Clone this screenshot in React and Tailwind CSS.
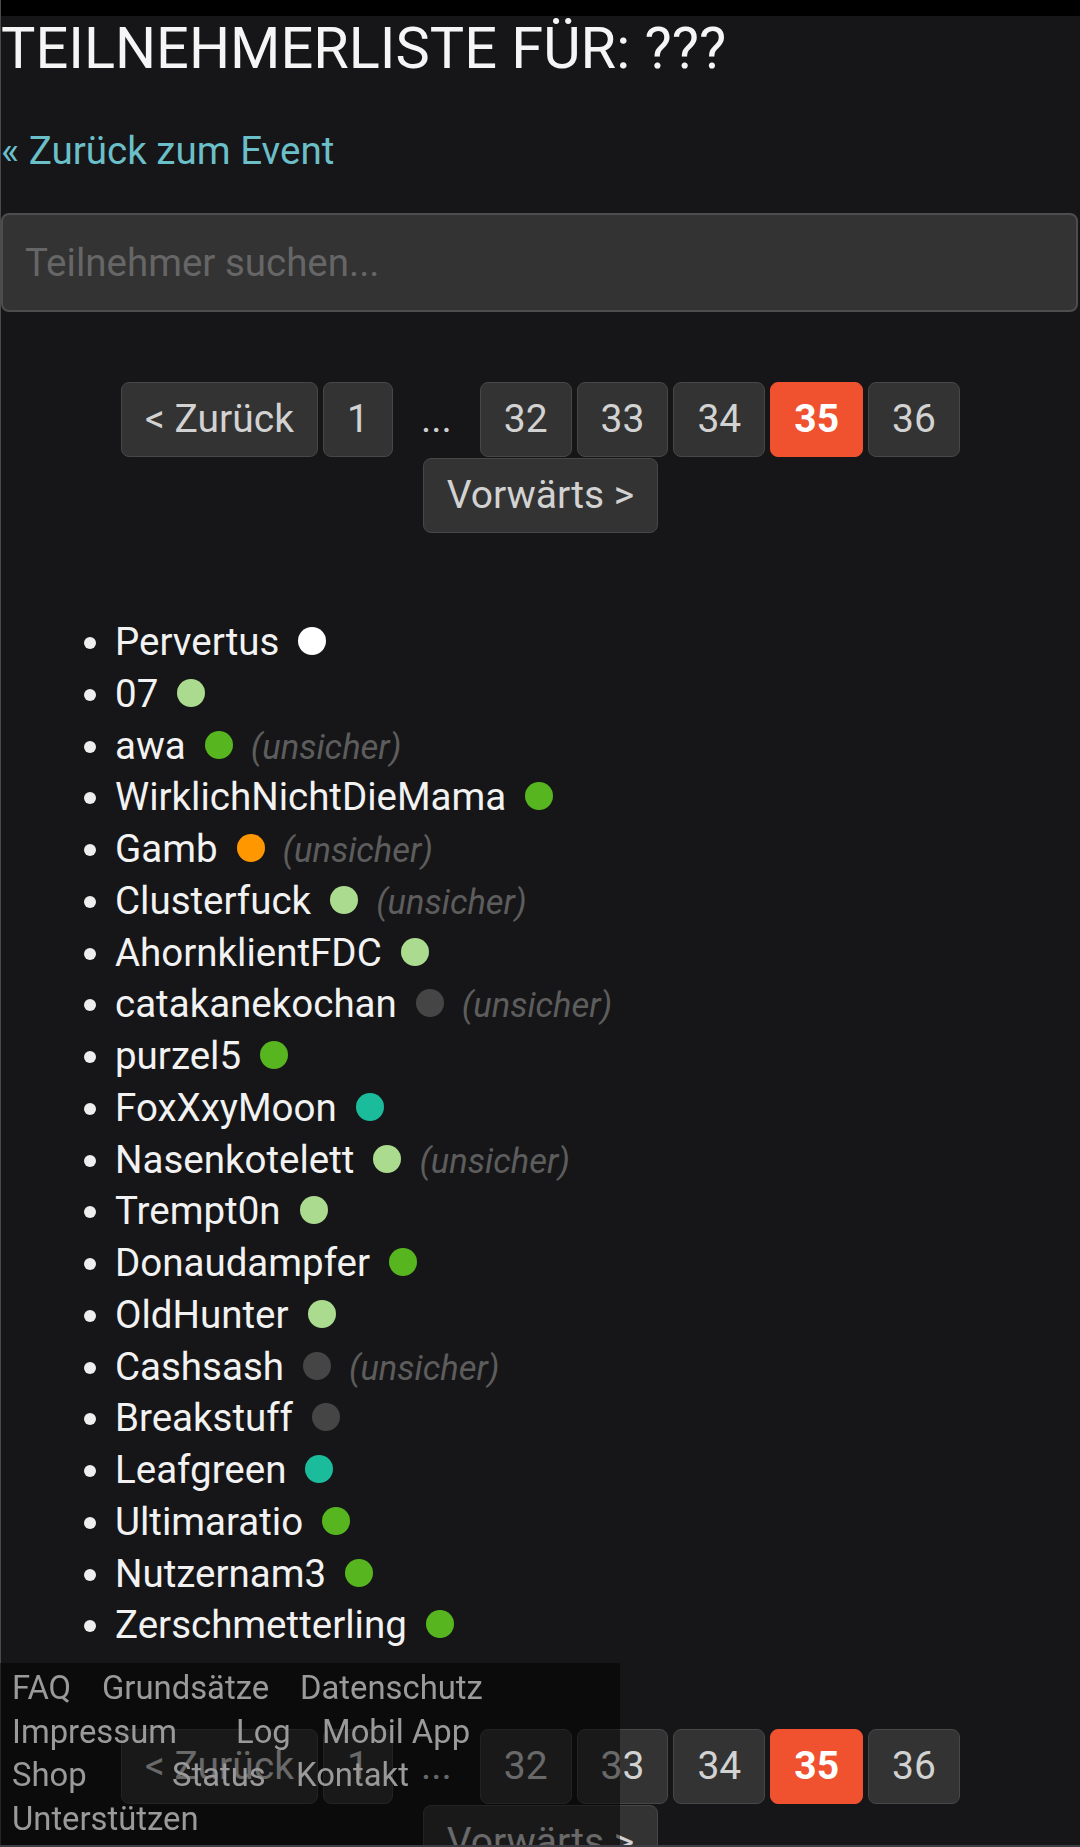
import React from "react";

const COLORS = {
  white: "bg-white",
  light: "bg-[#abdb8f]",
  green: "bg-[#57b61f]",
  orange: "bg-[#ff9800]",
  teal: "bg-[#1abc9c]",
  gray: "bg-[#454545]",
};

const users = [
  { name: "Pervertus", color: "white" },
  { name: "07", color: "light" },
  { name: "awa", color: "green", unsure: true },
  { name: "WirklichNichtDieMama", color: "green" },
  { name: "Gamb", color: "orange", unsure: true },
  { name: "Clusterfuck", color: "light", unsure: true },
  { name: "AhornklientFDC", color: "light" },
  { name: "catakanekochan", color: "gray", unsure: true },
  { name: "purzel5", color: "green" },
  { name: "FoxXxyMoon", color: "teal" },
  { name: "Nasenkotelett", color: "light", unsure: true },
  { name: "Trempt0n", color: "light" },
  { name: "Donaudampfer", color: "green" },
  { name: "OldHunter", color: "light" },
  { name: "Cashsash", color: "gray", unsure: true },
  { name: "Breakstuff", color: "gray" },
  { name: "Leafgreen", color: "teal" },
  { name: "Ultimaratio", color: "green" },
  { name: "Nutzernam3", color: "green" },
  { name: "Zerschmetterling", color: "green" },
];

const pages = ["32", "33", "34", "35", "36"];

function PageButton({ children, active }) {
  return (
    <a
      href="#"
      className={
        active
          ? "flex h-[75px] items-center rounded-[8px] border-[1.5px] border-[#f0512f] bg-[#f0512f] px-[23px] text-[39px] font-bold text-white"
          : "flex h-[75px] items-center rounded-[8px] border-[1.5px] border-[#474747] bg-[#333333] px-[23px] text-[39px] text-[#d2d2d2]"
      }
    >
      {children}
    </a>
  );
}

function Pagination({ className }) {
  return (
    <div className={"mx-auto flex max-w-[900px] flex-wrap justify-center gap-x-[5px] gap-y-px " + className}>
      <PageButton>&lt; Zurück</PageButton>
      <PageButton>1</PageButton>
      <span className="flex h-[75px] items-center px-[23px] text-[39px] text-[#cfcfcf]">...</span>
      {pages.map((p) => (
        <PageButton key={p} active={p === "35"}>
          {p}
        </PageButton>
      ))}
      <PageButton>Vorwärts &gt;</PageButton>
    </div>
  );
}

export default function App() {
  return (
    <div className="min-h-screen border-l border-[#4a4a4a] bg-[#161618] pb-[300px] font-['Roboto',sans-serif]">
      <div className="h-4 bg-black" />
      <h1 className="mt-[3px] text-[57.7px] leading-[58px] font-normal text-[#f5f5f5]">TEILNEHMERLISTE FÜR: ???</h1>
      <a href="#" className="mt-[51px] block text-[38.6px] leading-[45px] text-[#6bbfc8]">
        « Zurück zum Event
      </a>
      <input
        type="text"
        placeholder="Teilnehmer suchen..."
        className="mt-[40px] block h-[99px] w-[1077px] rounded-[8px] border-2 border-[#4d4d4d] bg-[#333333] px-[22px] text-[38.5px] text-[#ddd] outline-none placeholder:text-[#666666]"
      />

      <Pagination className="mt-[70px]" />

      <ul className="mt-[83px] list-disc pl-[114px] text-[38.5px] leading-[51.75px] text-[#f2f2f2] marker:text-[#eeeeee]">
        {users.map((u) => (
          <li key={u.name} className="h-[51.75px]">
            {u.name}
            <span className={"ml-[19px] inline-block h-[28px] w-[28px] rounded-full " + COLORS[u.color]} />
            {u.unsure && <span className="ml-[18px] text-[34.5px] italic text-[#5d5d5d]">(unsicher)</span>}
          </li>
        ))}
      </ul>

      <Pagination className="mt-[78px]" />

      <footer className="fixed bottom-0 left-0 h-[184px] w-[620px] bg-black/50 pt-[4px] pl-[12px] text-[32.8px] leading-[43.5px] text-[#9a9a9a]">
        <div className="flex">
          <a href="#" className="w-[90px]">FAQ</a>
          <a href="#" className="w-[198px]">Grundsätze</a>
          <a href="#">Datenschutz</a>
        </div>
        <div className="flex">
          <a href="#" className="w-[224px]">Impressum</a>
          <a href="#" className="w-[86px]">Log</a>
          <a href="#">Mobil App</a>
        </div>
        <div className="flex">
          <a href="#" className="w-[160px]">Shop</a>
          <a href="#" className="w-[124px]">Status</a>
          <a href="#">Kontakt</a>
        </div>
        <div className="flex">
          <a href="#">Unterstützen</a>
        </div>
      </footer>
      <div className="fixed bottom-0 left-0 h-[2px] w-full bg-[#3d3d43]" />
    </div>
  );
}
